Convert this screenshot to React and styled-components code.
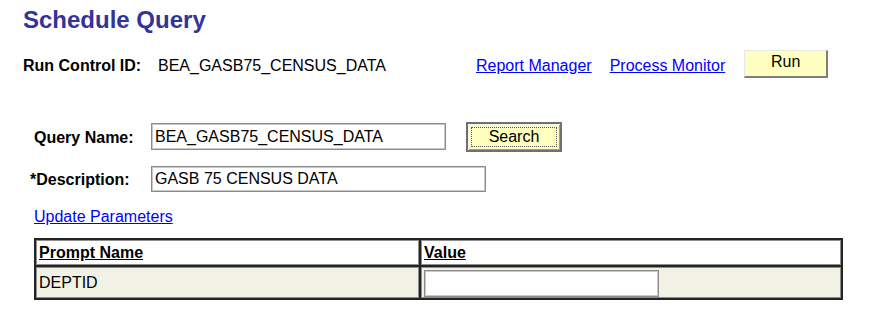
import React from "react";
import styled, { createGlobalStyle } from "styled-components";

const Global = createGlobalStyle`
  html, body { margin: 0; padding: 0; background: #ffffff; }
  body { font-family: "Liberation Sans", Arial, sans-serif; color: #000; }
`;

const Page = styled.div`
  width: 876px;
  height: 329px;
  box-sizing: border-box;
  padding: 8px 0 0 23px;
  overflow: hidden;
`;

const Title = styled.h1`
  margin: 0;
  font-size: 24px;
  line-height: 24px;
  font-weight: bold;
  color: #333399;
`;

const RunRow = styled.div`
  display: flex;
  align-items: center;
  height: 28px;
  margin-top: 18px;
  font-size: 16px;
`;

const RunLabel = styled.span`
  width: 135px;
  font-weight: bold;
  padding-top: 3px;
`;

const RunValue = styled.span`
  width: 318px;
  padding-top: 3px;
`;

const Link = styled.a`
  color: #0000ff;
  text-decoration: underline;
  font-size: 16px;
  margin-right: ${(p) => p.$gap || 0}px;
  padding-top: ${(p) => p.$pt || 0}px;
  cursor: pointer;
`;

const Button = styled.button`
  box-sizing: border-box;
  width: ${(p) => p.$w}px;
  height: ${(p) => p.$h}px;
  background: #ffffc0;
  font-family: "Liberation Sans", Arial, sans-serif;
  font-size: 16px;
  color: #000;
  padding: 0 0 ${(p) => p.$pb || 0}px;
  border-style: solid;
  border-width: 1px 2px 2px 1px;
  border-color: #e6e6e6 #7f7f7f #7f7f7f #e6e6e6;
  cursor: pointer;
`;

const FocusButton = styled(Button)`
  border: 2px solid #707070;
  box-shadow: inset 1px 1px 0 #f4f4f4, inset -1px -1px 0 #9a9a9a;
  position: relative;
  &::after {
    content: "";
    position: absolute;
    inset: 3px;
    border: 1px dotted #555;
  }
`;

const Form = styled.div`
  display: flex;
  flex-direction: column;
  padding-left: 11px;
  margin-top: 44px;
`;

const FieldRow = styled.div`
  display: flex;
  align-items: center;
  height: 29px;
  margin-top: ${(p) => p.$mt || 0}px;
`;

const FieldLabel = styled.label`
  box-sizing: border-box;
  width: ${(p) => p.$w || 117}px;
  margin-left: ${(p) => p.$shift || 0}px;
  font-size: 16px;
  font-weight: bold;
  padding-top: 2px;
`;

const TextInput = styled.input`
  box-sizing: border-box;
  width: ${(p) => p.$w}px;
  height: ${(p) => p.$h}px;
  border: 1px solid #8c8c8c;
  box-shadow: inset 1px 1px 0 #c8c8c8, inset -1px -1px 0 #c8c8c8;
  padding: 1px 3px 0;
  font-family: "Liberation Sans", Arial, sans-serif;
  font-size: 16px;
  color: #000;
  background: #fff;
  margin-right: ${(p) => p.$mr || 0}px;
  outline: none;
`;

const ParamLink = styled(Link)`
  align-self: flex-start;
  margin-top: 15px;
  line-height: 18px;
`;

const Grid = styled.table`
  margin-top: 12px;
  width: 809px;
  border-collapse: separate;
  border-spacing: 2px;
  background: #242424;
  font-size: 16px;
`;

const HeadCell = styled.th`
  box-sizing: border-box;
  width: ${(p) => (p.$w ? `${p.$w}px` : "auto")};
  height: 25px;
  padding: 0 0 0 2px;
  text-align: left;
  font-weight: bold;
  text-decoration: underline;
  background: #ffffff;
  border: 1px solid #8f8f8f;
  vertical-align: middle;
  font-family: "Liberation Sans Narrow", "Liberation Sans", Arial, sans-serif;
`;

const BodyCell = styled.td`
  box-sizing: border-box;
  height: 31px;
  padding: 0 0 0 2px;
  background: #f2f1e6;
  border: 1px solid #8f8f8f;
  vertical-align: middle;
  font-family: "Liberation Sans Narrow", "Liberation Sans", Arial, sans-serif;
`;

const CellInput = styled(TextInput)`
  display: block;
  margin-top: 1px;
`;

export default function App() {
  return (
    <>
      <Global />
      <Page>
        <Title>Schedule Query</Title>
        <RunRow>
          <RunLabel>Run Control ID:</RunLabel>
          <RunValue>BEA_GASB75_CENSUS_DATA</RunValue>
          <Link $gap={18} $pt={3}>Report Manager</Link>
          <Link $gap={19} $pt={3}>Process Monitor</Link>
          <Button $w={84} $h={28} $pb={3}>Run</Button>
        </RunRow>
        <Form>
          <FieldRow>
            <FieldLabel>Query Name:</FieldLabel>
            <TextInput $w={295} $h={27} $mr={20} defaultValue="BEA_GASB75_CENSUS_DATA" />
            <FocusButton $w={96} $h={30}>Search</FocusButton>
          </FieldRow>
          <FieldRow $mt={13}>
            <FieldLabel $shift={-4} $w={121}>*Description:</FieldLabel>
            <TextInput $w={335} $h={26} defaultValue="GASB 75 CENSUS DATA" />
          </FieldRow>
          <ParamLink>Update Parameters</ParamLink>
          <Grid>
            <tbody>
              <tr>
                <HeadCell $w={383}>Prompt Name</HeadCell>
                <HeadCell>Value</HeadCell>
              </tr>
              <tr>
                <BodyCell>DEPTID</BodyCell>
                <BodyCell>
                  <CellInput $w={235} $h={27} />
                </BodyCell>
              </tr>
            </tbody>
          </Grid>
        </Form>
      </Page>
    </>
  );
}
